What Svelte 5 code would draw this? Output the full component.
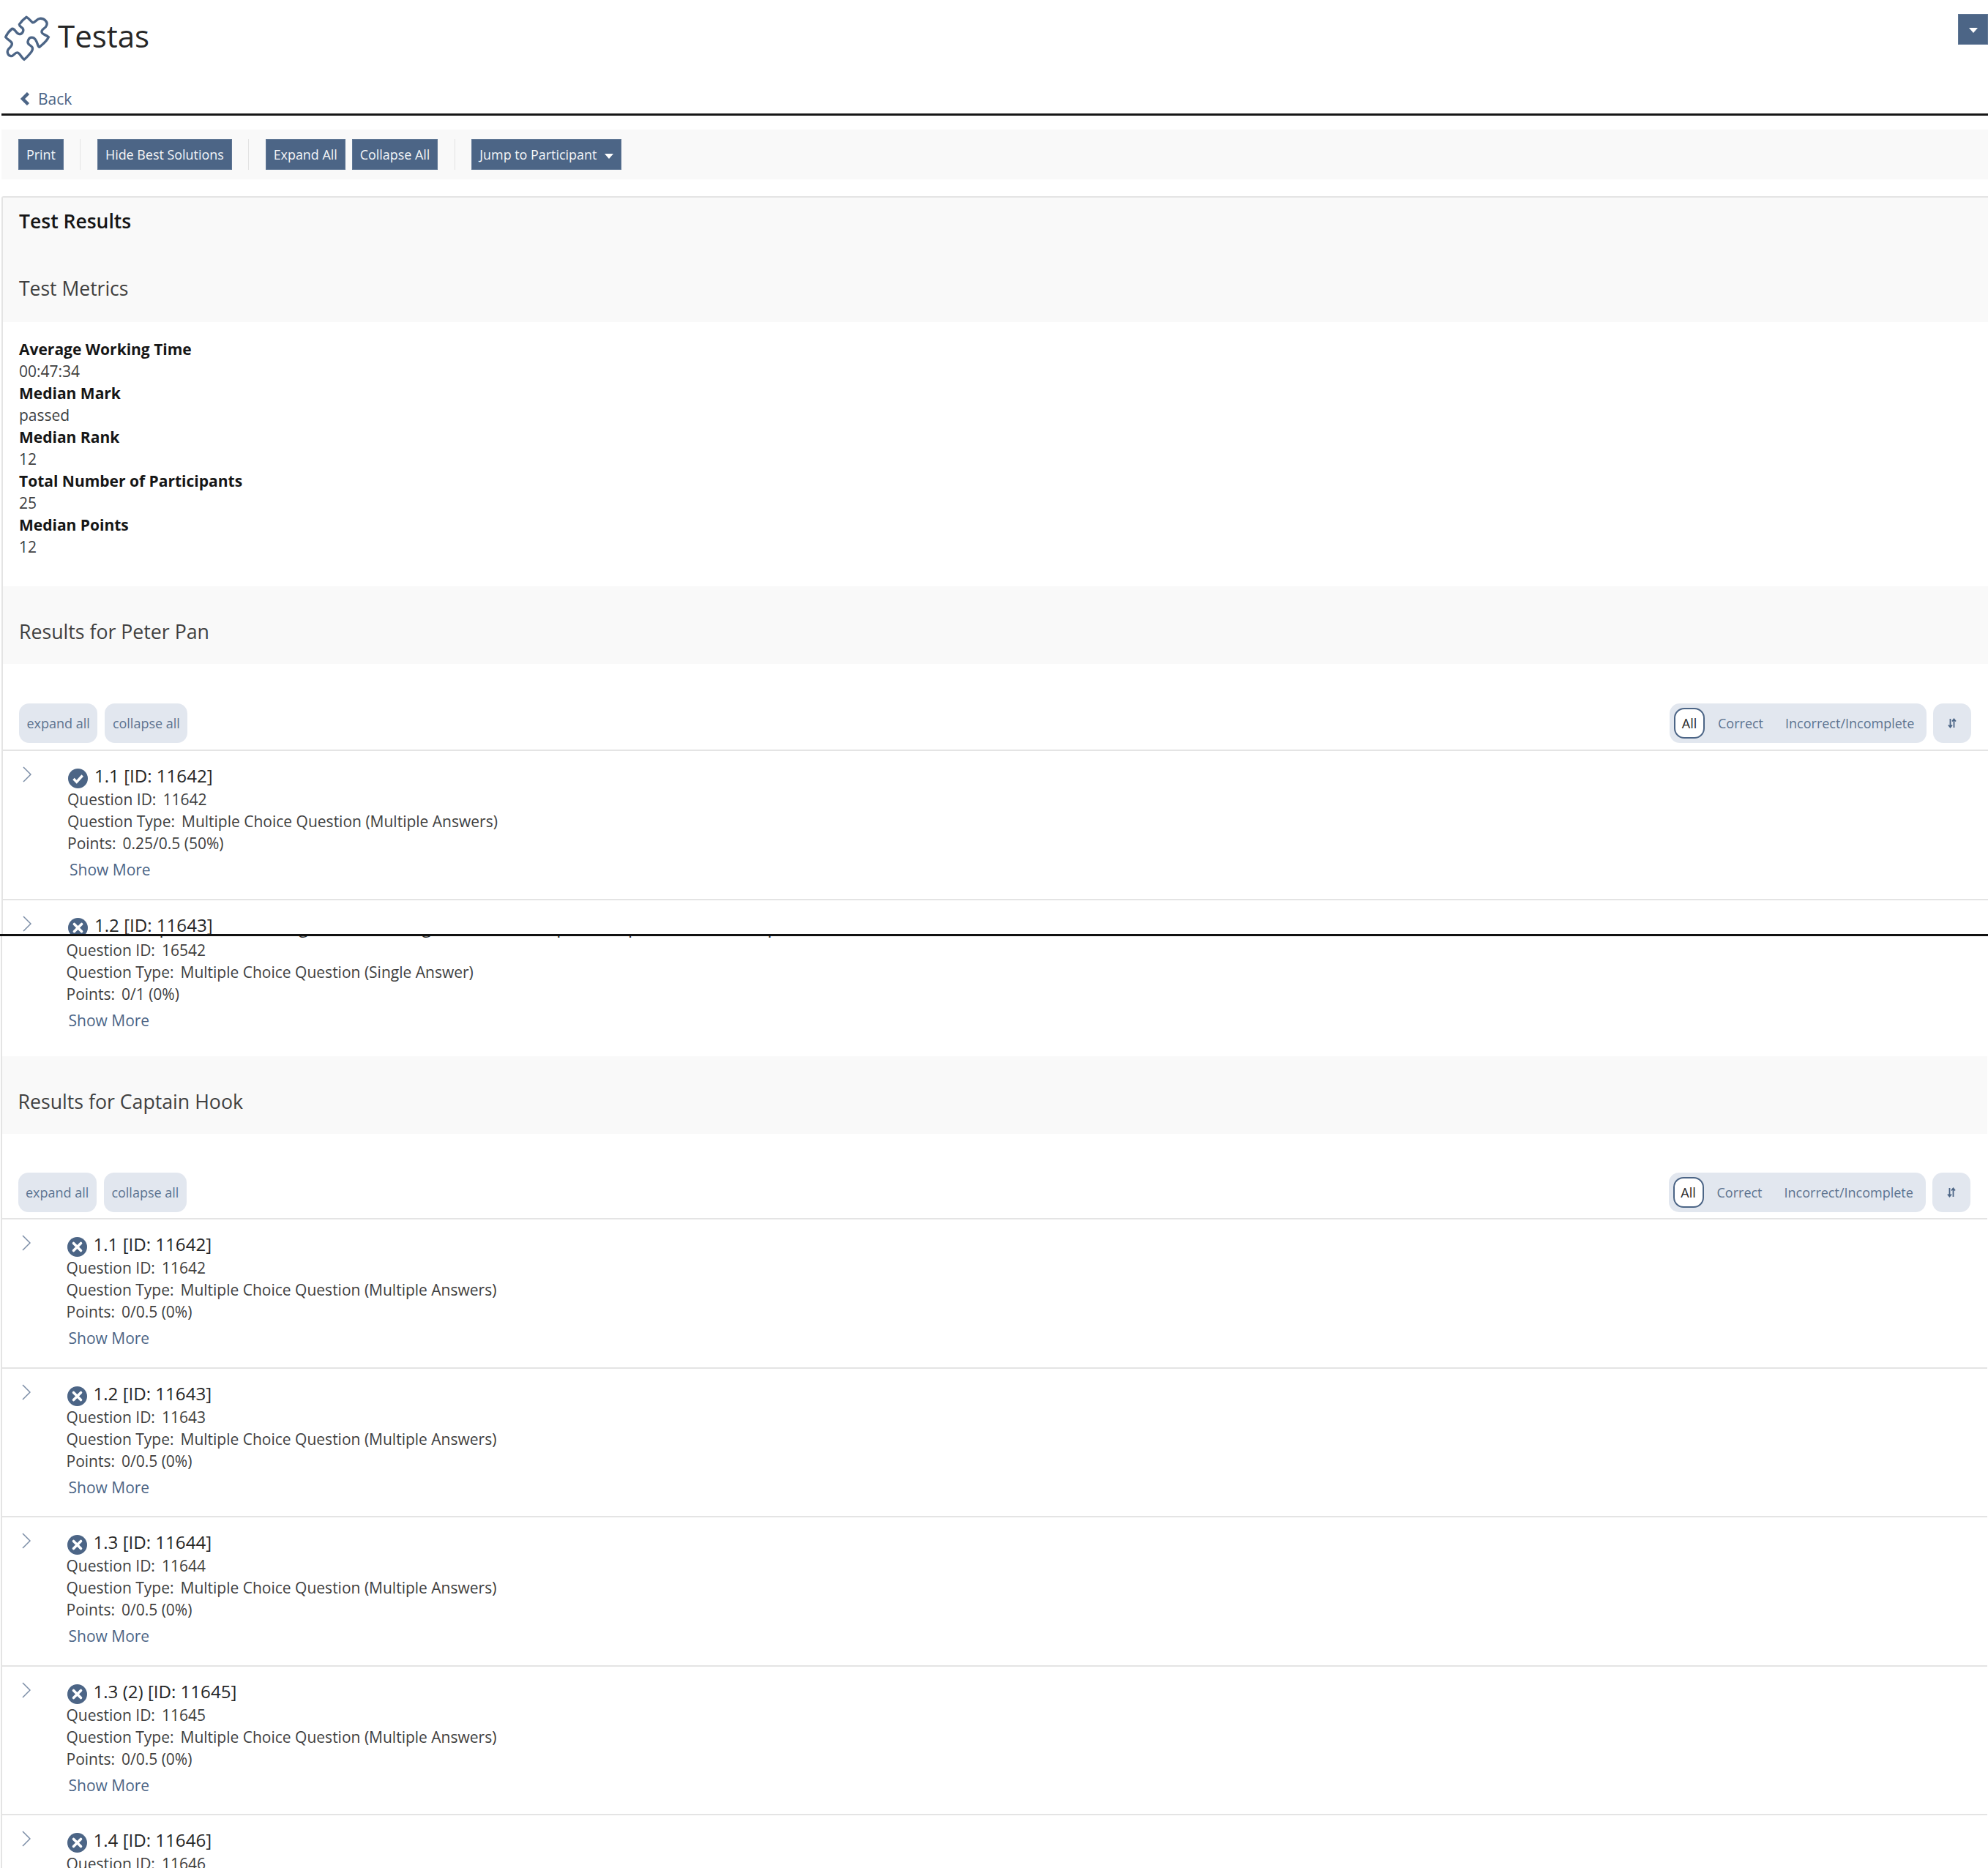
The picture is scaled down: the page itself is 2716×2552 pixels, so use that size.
<script>
	const metrics = [
		['Average Working Time', '00:47:34'],
		['Median Mark', 'passed'],
		['Median Rank', '12'],
		['Total Number of Participants', '25'],
		['Median Points', '12']
	];

	const mc = 'Multiple Choice Question (Multiple Answers)';

	const peterPan = [
		{ title: '1.1 [ID: 11642]', id: 11642, type: mc, points: '0.25/0.5 (50%)', ok: true },
		{ title: '1.2 [ID: 11643]', id: 11643, type: mc, points: '0/0.5 (0%)', ok: false }
	];

	const captainHook = [
		{ title: '1.1 [ID: 11642]', id: 11642, type: mc, points: '0/0.5 (0%)', ok: false },
		{ title: '1.2 [ID: 11643]', id: 11643, type: mc, points: '0/0.5 (0%)', ok: false },
		{ title: '1.3 [ID: 11644]', id: 11644, type: mc, points: '0/0.5 (0%)', ok: false },
		{ title: '1.3 (2) [ID: 11645]', id: 11645, type: mc, points: '0/0.5 (0%)', ok: false },
		{ title: '1.4 [ID: 11646]', id: 11646, type: mc, points: '0/0.5 (0%)', ok: false }
	];
</script>

{#snippet listbar()}
	<div class="listbar">
		<div class="listbar-left">
			<button class="soft">expand all</button>
			<button class="soft">collapse all</button>
		</div>
		<div class="listbar-right">
			<div class="mode">
				<button class="mode-on">All</button>
				<button class="mode-off">Correct</button>
				<button class="mode-off">Incorrect/Incomplete</button>
			</div>
			<button class="soft sort" aria-label="sort">
				<svg viewBox="0 0 12 14" width="12" height="14">
					<path d="M3.5 1v11M1 9.5l2.5 3 2.5-3M8.5 13V2M6 4.500l2.500-3 2.500 3" fill="none" stroke="#4c6586" stroke-width="1.800" />
				</svg>
			</button>
		</div>
	</div>
{/snippet}

{#snippet rows(q)}
	<div class="row"><span class="lab">Question ID:</span>{q.id}</div>
	<div class="row"><span class="lab">Question Type:</span>{q.type}</div>
	<div class="row"><span class="lab">Points:</span>{q.points}</div>
	<a class="more" href="#top">Show More</a>
{/snippet}

{#snippet question(q)}
	<div class="item">
		<svg class="chev" viewBox="0 0 12 22" width="12" height="22">
			<path d="M1 1l10 10L1 21" fill="none" stroke="#7b8da6" stroke-width="1.500" />
		</svg>
		<div class="item-body">
			<div class="item-title">
				<svg class="state" viewBox="0 0 27 27" width="27" height="27">
					<circle cx="13.500" cy="13.500" r="13.500" fill="#4c6586" />
					{#if q.ok}
						<path d="M7.500 14l4.200 4.200 8-8.700" fill="none" stroke="#fff" stroke-width="3.400" />
					{:else}
						<path d="M8.500 8.500l10 10M18.500 8.500l-10 10" fill="none" stroke="#fff" stroke-width="3.600" stroke-linecap="round" />
					{/if}
				</svg>
				<span>{q.title}</span>
			</div>
			{@render rows(q)}
		</div>
	</div>
{/snippet}

<div class="screen">
	<div class="sheet sheet-top">
		<header class="head">
			<svg class="logo" viewBox="0 0 240 240" width="80" height="80">
				<path
					d="M105 40C115 45 122 55 130 62C140 66 146 48 160 46C178 44 194 60 188 74C184 88 165 88 168 102C170 112 186 112 196 122C190 138 174 150 160 162C150 168 152 130 132 124C114 120 104 144 118 154C128 160 136 166 126 182C118 192 108 204 96 214C86 208 80 190 70 186C58 182 54 202 42 200C30 198 24 184 30 174C36 164 48 160 46 148C44 138 28 134 20 122C26 108 36 96 46 88C58 84 62 108 76 110C90 110 96 94 90 86C84 80 76 78 76 70C84 58 94 48 105 40Z"
					fill="none"
					stroke="#4c6586"
					stroke-width="10"
				/>
			</svg>
			<h1>Testas</h1>
			<button class="btn corner" aria-label="menu"><span class="caret"></span></button>
		</header>
		<a class="back" href="#top">
			<svg viewBox="0 0 14 18" width="14" height="18"><path d="M11.500 1.500L4 9l7.500 7.500" fill="none" stroke="#4c6586" stroke-width="4.500" /></svg>
			Back
		</a>
		<div class="rule"></div>

		<div class="toolbar">
			<button class="btn">Print</button>
			<span class="sep"></span>
			<button class="btn">Hide Best Solutions</button>
			<span class="sep"></span>
			<button class="btn">Expand All</button>
			<button class="btn">Collapse All</button>
			<span class="sep"></span>
			<button class="btn">Jump to Participant<span class="caret"></span></button>
		</div>

		<div class="panel">
			<div class="panel-head">
				<h2>Test Results</h2>
				<h3>Test Metrics</h3>
			</div>
			<dl class="metrics">
				{#each metrics as [label, value]}
					<dt>{label}</dt>
					<dd>{value}</dd>
				{/each}
			</dl>
			<h3 class="section">Results for Peter Pan</h3>
			{@render listbar()}
			{#each peterPan as q}
				{@render question(q)}
			{/each}
		</div>
	</div>

	<div class="rule rule-cut"></div>

	<div class="sheet sheet-bottom">
		<div class="panel panel-cont">
			<div class="tail">
				<div class="cut-line"><span>1.2 Sample Question (Single Choice), Single Answer, Sample Multiple Choice, Example</span></div>
				{@render rows({ id: 16542, type: 'Multiple Choice Question (Single Answer)', points: '0/1 (0%)' })}
			</div>
			<h3 class="section">Results for Captain Hook</h3>
			{@render listbar()}
			{#each captainHook as q}
				{@render question(q)}
			{/each}
		</div>
	</div>
</div>

<style>
	:global(body) {
		margin: 0;
		background: white;
		font-family: 'Open Sans', 'Noto Sans', sans-serif;
		font-size: 21px;
		line-height: 30px;
		color: #262626;
	}

	.screen {
		width: 2716px;
		height: 2552px;
		overflow: hidden;
	}

	.sheet-top {
		height: 1276px;
		overflow: hidden;
		padding-left: 2px;
	}

	.sheet-bottom {
		height: 1273px;
		overflow: hidden;
		padding: 0 1.500px 0 0.500px;
	}

	.head {
		height: 111px;
		display: flex;
		align-items: flex-start;
	}

	.logo {
		margin: 10px 0 0 -1px;
		flex: none;
	}

	h1 {
		margin: 22px 0 0 -2px;
		font-size: 42px;
		line-height: 54px;
		font-weight: 400;
		color: #262626;
	}

	.btn {
		height: 42px;
		padding: 0 10px;
		border: 1px solid #5f7694;
		background: #4c6586;
		color: #f4f6f8;
		font: inherit;
		font-size: 17.900px;
		line-height: 38px;
		white-space: nowrap;
	}

	.corner {
		margin: 19px 0 0 auto;
		width: 41px;
		padding: 0;
		flex: none;
	}

	.caret {
		display: inline-block;
		vertical-align: middle;
		margin-left: 11px;
		border-top: 7px solid white;
		border-left: 6px solid transparent;
		border-right: 6px solid transparent;
	}

	.corner .caret {
		margin-left: 0;
		margin-bottom: 2px;
	}

	.back {
		display: flex;
		align-items: center;
		gap: 11px;
		height: 44px;
		box-sizing: border-box;
		padding: 3px 0 0 25px;
		color: #4c6586;
		text-decoration: none;
	}

	.rule {
		height: 3px;
		background: #161616;
	}

	.rule-cut {
		background: #111;
	}

	.toolbar {
		margin-top: 19px;
		height: 68px;
		box-sizing: border-box;
		padding: 13px 23px;
		background: #f9f9f9;
		display: flex;
		gap: 9px;
	}

	.sep {
		width: 1px;
		margin: 0 13.500px;
		background: #e3e3e3;
	}

	.panel {
		margin-top: 23px;
		border-top: 2px solid #e4e4e4;
		border-left: 2px solid #e4e4e4;
		border-top-left-radius: 3px;
	}

	.panel-cont {
		margin-top: 0;
		border-top: none;
		border-top-left-radius: 0;
	}

	.panel-head {
		height: 170px;
		background: #f9f9f9;
		padding: 16px 0 0 22px;
		box-sizing: border-box;
	}

	h2 {
		margin: 0;
		font-size: 26.500px;
		line-height: 32px;
		font-weight: 600;
		color: #161616;
	}

	h3 {
		margin: 0;
		font-weight: 400;
		color: #404040;
	}

	.panel-head h3 {
		margin-top: 60px;
		font-size: 26.500px;
		line-height: 32px;
	}

	.metrics {
		margin: 0;
		height: 361px;
		box-sizing: border-box;
		padding: 22px 0 0 22px;
	}

	dt {
		font-weight: 700;
		color: #161616;
	}

	dd {
		margin: 0;
		color: #404040;
	}

	.section {
		height: 106px;
		box-sizing: border-box;
		padding: 46px 0 0 22px;
		background: #f9f9f9;
		font-size: 26.700px;
		line-height: 32px;
	}

	.listbar {
		height: 119px;
		box-sizing: border-box;
		padding: 54px 23px 0 22px;
		border-bottom: 2px solid #e4e4e4;
		display: flex;
		justify-content: space-between;
		align-items: flex-start;
	}

	.sheet-bottom .listbar {
		height: 117px;
		padding-top: 53px;
	}

	.listbar-left,
	.listbar-right {
		display: flex;
		gap: 10px;
	}

	.listbar-right {
		gap: 9px;
	}

	.soft {
		height: 54px;
		padding: 0 10.500px;
		border: none;
		border-radius: 14px;
		background: #e2e7ef;
		color: #5c7390;
		font: inherit;
		font-size: 18px;
	}

	.sort {
		width: 52px;
		padding: 0;
		display: flex;
		align-items: center;
		justify-content: center;
	}

	.mode {
		height: 54px;
		width: 351px;
		box-sizing: border-box;
		padding: 6px;
		border-radius: 14px;
		background: #e2e7ef;
		display: flex;
		align-items: center;
		gap: 18px;
	}

	.mode button {
		font: inherit;
		font-size: 18px;
		border: none;
		background: none;
		padding: 0;
		flex: none;
	}

	.mode .mode-on {
		width: 42px;
		height: 42px;
		border: 2px solid #4c6586;
		border-radius: 14px;
		background: white;
		color: #262626;
	}

	.mode .mode-off {
		color: #5c7390;
		margin-right: 12px;
	}

	.item {
		height: 203.600px;
		box-sizing: border-box;
		border-bottom: 2px solid #e4e4e4;
		padding: 17px 0 0 27px;
		display: flex;
	}

	.chev {
		flex: none;
		margin: 4px 49px 0 0;
	}

	.item-title {
		display: flex;
		align-items: flex-start;
		gap: 9px;
		margin-left: 1px;
		height: 34px;
		font-size: 24.100px;
		line-height: 34px;
		color: #262626;
	}

	.state {
		margin-top: 7px;
		flex: none;
	}

	.row {
		color: #404040;
		white-space: nowrap;
	}

	.lab {
		margin-right: 9px;
	}

	.more {
		display: block;
		margin: 6px 0 0 3px;
		color: #4c6586;
		text-decoration: none;
	}

	.tail {
		height: 164px;
		padding-left: 88px;
	}

	.cut-line {
		height: 4px;
		overflow: hidden;
		position: relative;
		font-size: 24.100px;
		line-height: 34px;
		color: #262626;
	}

	.cut-line span {
		position: absolute;
		left: 38px;
		bottom: 0;
		white-space: nowrap;
	}
</style>
